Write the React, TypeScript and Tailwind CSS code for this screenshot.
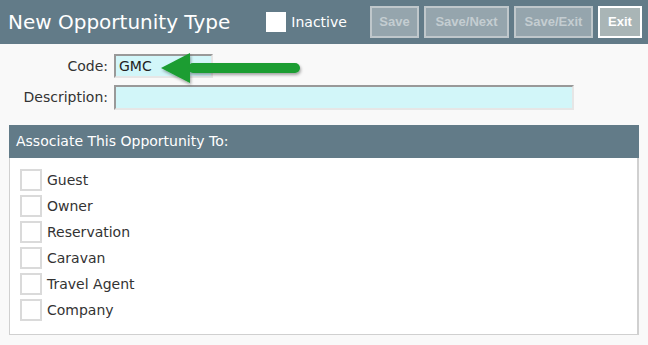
import React from "react";

const items = ["Guest", "Owner", "Reservation", "Caravan", "Travel Agent", "Company"];

export default function App() {
  return (
    <div className="relative w-[648px] h-[345px] bg-[#f9f9f9] overflow-hidden" style={{ fontFamily: '"DejaVu Sans", Verdana, sans-serif' }}>
      {/* Header */}
      <div className="h-[44px] bg-[#627b88] flex items-center pl-[8px] pr-[6px]">
        <div className="text-[20px] text-white leading-none pb-[1px]">New Opportunity Type</div>
        <div className="ml-[36px] flex items-center">
          <div className="w-[20px] h-[20px] bg-white" />
          <span className="ml-[5px] text-[14px] text-white">Inactive</span>
        </div>
        <div className="ml-auto flex gap-[5px]" style={{ fontFamily: '"Liberation Sans", Arial, sans-serif' }}>
          <button className="w-[49px] h-[32px] border-2 border-[#bfc7cb] bg-[#95a5ad] text-[#c4cdd1] text-[13px] font-bold">Save</button>
          <button className="w-[85px] h-[32px] border-2 border-[#bfc7cb] bg-[#95a5ad] text-[#c4cdd1] text-[13px] font-bold">Save/Next</button>
          <button className="w-[79px] h-[32px] border-2 border-[#bfc7cb] bg-[#95a5ad] text-[#c4cdd1] text-[13px] font-bold">Save/Exit</button>
          <button className="w-[44px] h-[32px] border-2 border-white bg-[#a9b5b6] text-white text-[13px] font-bold">Exit</button>
        </div>
      </div>

      {/* Form */}
      <div className="pt-[10px] flex flex-col gap-[7px]">
        <div className="flex items-center">
          <div className="w-[108px] text-right text-[14px] text-[#333]">Code:</div>
          <div className="ml-[6px] w-[99px] h-[24px] bg-[#d2f6f9] border-2 border-t-[#999] border-l-[#999] border-r-[#e6e6e6] border-b-[#e6e6e6] flex items-center pl-[3px] text-[14px] text-[#222]">
            GMC
          </div>
        </div>
        <div className="flex items-center">
          <div className="w-[108px] text-right text-[14px] text-[#333]">Description:</div>
          <div className="ml-[6px] w-[460px] h-[25px] bg-[#d2f6f9] border-2 border-t-[#999] border-l-[#999] border-r-[#e6e6e6] border-b-[#e6e6e6]" />
        </div>
      </div>

      {/* Panel */}
      <div className="ml-[9px] mt-[15px] w-[630px]">
        <div className="h-[33px] bg-[#627b88] flex items-center pl-[7px] text-[14px] text-white">Associate This Opportunity To:</div>
        <div className="h-[177px] bg-white border border-t-0 border-[#d0d0d0] border-r-2 pt-[11px] pl-[10px] flex flex-col gap-[4px]">
          {items.map((t) => (
            <div key={t} className="flex items-center h-[22px]">
              <div className="w-[22px] h-[22px] border-2 border-[#dadada] bg-white" />
              <span className="ml-[5px] text-[14px] text-[#333]">{t}</span>
            </div>
          ))}
        </div>
      </div>

      {/* Arrow overlay */}
      <svg className="absolute left-[155px] top-[48px]" width="155" height="42" viewBox="0 0 155 42">
        <defs>
          <filter id="sh" x="-10%" y="-30%" width="130%" height="170%">
            <feDropShadow dx="1" dy="2" stdDeviation="1.5" floodColor="#000" floodOpacity="0.35" />
          </filter>
        </defs>
        <g filter="url(#sh)" fill="#1b9d31">
          <polygon points="6,20 35,5 35,35" />
          <rect x="33" y="15" width="112" height="10" rx="5" />
        </g>
      </svg>
    </div>
  );
}
